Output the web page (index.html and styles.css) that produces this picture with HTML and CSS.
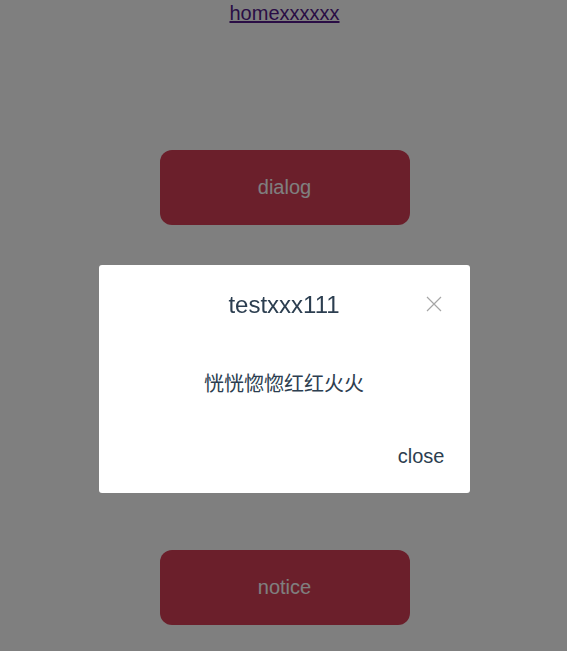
FILE: index.html
```html
<!DOCTYPE html>
<html lang="zh">
<head>
<meta charset="utf-8">
<title>home</title>
<link rel="stylesheet" href="styles.css">
</head>
<body>
<div class="app">
  <nav class="nav"><a class="nav-link" href="#">homexxxxxx</a></nav>
  <div class="actions">
    <button class="btn">dialog</button>
    <button class="btn">notice</button>
  </div>
</div>
<div class="mask">
  <div class="dialog">
    <div class="dialog-header">
      <span class="dialog-title">testxxx111</span>
      <span class="dialog-x" aria-label="close">
        <svg width="16" height="16" viewBox="0 0 16 16"><path d="M1 1 L15 15 M15 1 L1 15" stroke="#a6a6a6" stroke-width="1.2" fill="none"/></svg>
      </span>
    </div>
    <div class="dialog-body">恍恍惚惚红红火火</div>
    <div class="dialog-footer"><span class="dialog-close">close</span></div>
  </div>
</div>
</body>
</html>
```

FILE: styles.css
```css
html, body {
  margin: 0;
  padding: 0;
  background: #ffffff;
}
body {
  font-family: "Liberation Sans", Arial, "Noto Sans CJK SC", sans-serif;
  color: #2c3e50;
}
.app {
  text-align: center;
  padding-left: 2px;
}
.nav {
  font-size: 20px;
  line-height: 26px;
}
.nav-link {
  color: #551a8b;
  text-decoration: underline;
}
.actions {
  display: flex;
  flex-direction: column;
  align-items: center;
  gap: 325px;
  padding-top: 124px;
}
.btn {
  width: 250px;
  height: 75px;
  border: none;
  border-radius: 12px;
  background: #d63f57;
  color: #ffffff;
  font-family: "Liberation Sans", Arial, sans-serif;
  font-size: 20px;
  padding: 0;
}
.mask {
  position: fixed;
  inset: 0;
  background: rgba(0, 0, 0, 0.5);
  display: flex;
  justify-content: center;
  align-items: flex-start;
  padding-top: 265px;
  padding-left: 1px;
}
.dialog {
  width: 371px;
  background: #ffffff;
  border-radius: 3px;
  padding-bottom: 25px;
}
.dialog-header {
  position: relative;
  padding-top: 26px;
  text-align: center;
}
.dialog-title {
  font-size: 24px;
  line-height: 28px;
  display: block;
}
.dialog-x {
  position: absolute;
  right: 28px;
  top: 31px;
  width: 16px;
  height: 16px;
  display: block;
}
.dialog-x svg {
  display: block;
}
.dialog-body {
  margin-top: 52px;
  text-align: center;
  font-family: "Noto Sans CJK SC", sans-serif;
  font-size: 20px;
  line-height: 24px;
}
.dialog-footer {
  margin-top: 49px;
  text-align: right;
  padding-right: 25px;
  font-size: 20px;
  line-height: 24px;
}
```
